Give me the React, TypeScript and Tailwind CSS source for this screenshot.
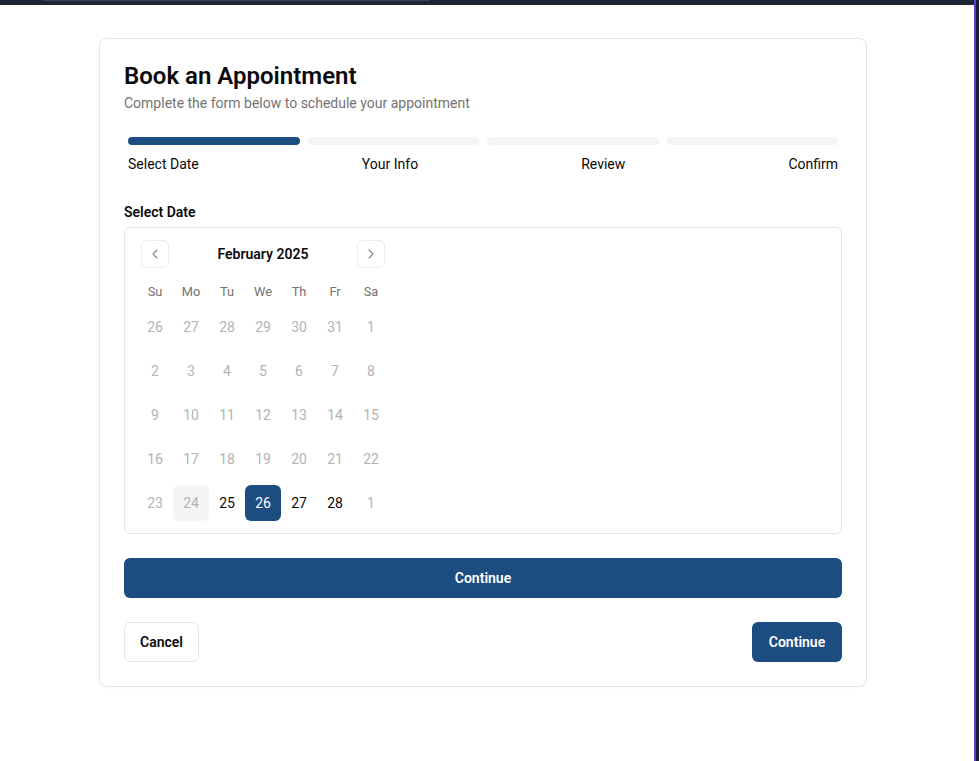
import React from 'react';
import { ChevronLeft, ChevronRight } from 'lucide-react';

type Day = { n: number; kind: 'outside' | 'disabled' | 'today' | 'open' | 'selected' };

const weeks: Day[][] = [
  [26, 27, 28, 29, 30, 31].map((n) => ({ n, kind: 'outside' as const })).concat([{ n: 1, kind: 'disabled' }]),
  [2, 3, 4, 5, 6, 7, 8].map((n) => ({ n, kind: 'disabled' as const })),
  [9, 10, 11, 12, 13, 14, 15].map((n) => ({ n, kind: 'disabled' as const })),
  [16, 17, 18, 19, 20, 21, 22].map((n) => ({ n, kind: 'disabled' as const })),
  [
    { n: 23, kind: 'disabled' },
    { n: 24, kind: 'today' },
    { n: 25, kind: 'open' },
    { n: 26, kind: 'selected' },
    { n: 27, kind: 'open' },
    { n: 28, kind: 'open' },
    { n: 1, kind: 'outside' },
  ],
];

const dayClass: Record<Day['kind'], string> = {
  outside: 'text-[#b3b3b3]',
  disabled: 'text-[#b3b3b3]',
  today: 'bg-[#f5f5f4] text-[#b3b3b3]',
  open: 'text-[#0a0a0a]',
  selected: 'bg-[#1b4d81] text-white',
};

const steps = ['Select Date', 'Your Info', 'Review', 'Confirm'];

const Calendar: React.FC = () => {
  return (
    <div className="mt-[5px] rounded-md border border-[#e5e5e5] p-3">
      <div className="w-[252px]">
        <div className="relative flex h-7 items-center justify-center">
          <button className="absolute left-1 flex h-7 w-7 items-center justify-center rounded-md border border-[#ececec] text-[#8a8a8a]">
            <ChevronLeft className="h-4 w-4" strokeWidth={1.75} />
          </button>
          <span className="text-sm font-semibold text-[#0a0a0a]">February 2025</span>
          <button className="absolute right-1 flex h-7 w-7 items-center justify-center rounded-md border border-[#ececec] text-[#8a8a8a]">
            <ChevronRight className="h-4 w-4" strokeWidth={1.75} />
          </button>
        </div>

        <div className="mt-[14px] grid h-4 grid-cols-7 items-center text-center text-[12.8px] text-[#737373]">
          {['Su', 'Mo', 'Tu', 'We', 'Th', 'Fr', 'Sa'].map((d) => (
            <span key={d}>{d}</span>
          ))}
        </div>

        {weeks.map((week, i) => (
          <div key={i} className={`grid grid-cols-7 ${i === 0 ? 'mt-[11px]' : 'mt-2'}`}>
            {week.map((d, j) => (
              <div
                key={j}
                className={`flex h-9 w-9 items-center justify-center rounded-md text-sm ${dayClass[d.kind]}`}
              >
                {d.n}
              </div>
            ))}
          </div>
        ))}
      </div>
    </div>
  );
};

const App: React.FC = () => {
  return (
    <div className="flex min-h-[761px] w-full bg-white font-['Roboto',sans-serif]">
      <div className="flex w-[974px] flex-col">
        <div className="h-[5px] w-full bg-[#1e2537]">
          <div className="ml-[43px] h-px w-[387px] bg-[#3a4256]" />
        </div>

        <div className="pl-[99px] pt-[33px]">
          <div className="w-[768px] rounded-lg border border-[#e5e5e5] bg-white p-6 shadow-[0_1px_2px_rgba(0,0,0,0.03)]">
            <h1 className="text-2xl leading-[26px] font-semibold text-[#0a0a0a]">Book an Appointment</h1>
            <p className="mt-1 text-sm text-[#737373]">Complete the form below to schedule your appointment</p>

            <div className="mt-6 px-1">
              <div className="flex gap-2">
                {steps.map((s, i) => (
                  <div
                    key={s}
                    className={`h-2 flex-1 rounded-full ${i === 0 ? 'bg-[#1b4d81]' : 'bg-[#f4f4f4]'}`}
                  />
                ))}
              </div>
              <div className="mt-[9px] flex justify-between text-sm text-[#0a0a0a]">
                {steps.map((s) => (
                  <span key={s}>{s}</span>
                ))}
              </div>
            </div>

            <div className="mt-7 text-sm font-semibold text-[#0a0a0a]">Select Date</div>
            <Calendar />

            <button className="mt-6 flex h-10 w-full items-center justify-center rounded-md bg-[#1b4d81] text-sm font-semibold text-white">
              Continue
            </button>

            <div className="mt-6 flex items-center justify-between">
              <button className="h-10 w-[75px] rounded-md border border-[#e5e5e5] bg-white text-sm font-semibold text-[#0a0a0a]">
                Cancel
              </button>
              <button className="h-10 w-[90px] rounded-md bg-[#1b4d81] text-sm font-semibold text-white">
                Continue
              </button>
            </div>
          </div>
        </div>
      </div>
      <div className="w-[2px] bg-[#5a3fd0]" />
      <div className="w-[3px] bg-[#1e1d38]" />
    </div>
  );
};

export default App;
